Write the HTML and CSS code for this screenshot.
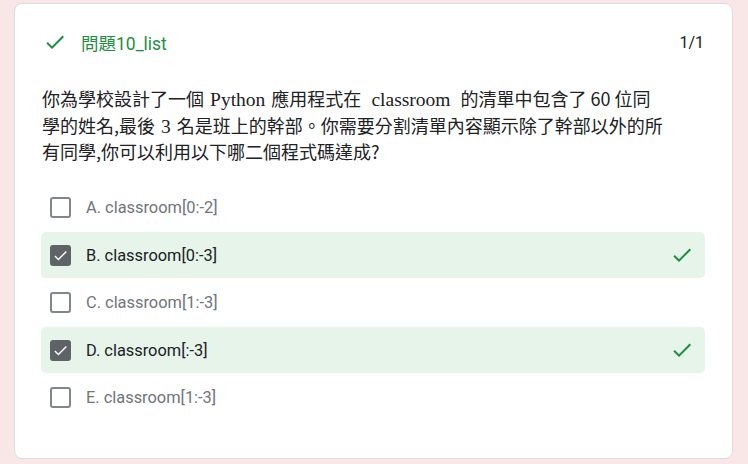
FILE: index.html
```html
<!DOCTYPE html>
<html lang="zh-Hant">
<head>
<meta charset="utf-8">
<link rel="stylesheet" href="styles.css">
</head>
<body>
<div class="card">
  <div class="header">
    <div class="title">
      <svg class="tick" width="24" height="24" viewBox="0 0 24 24"><path d="M9 16.2L4.8 12l-1.4 1.4L9 19 21 7l-1.4-1.4z" fill="#1e8e3e"/></svg>
      <span class="title-text">問題10_list</span>
    </div>
    <span class="score">1/1</span>
  </div>
  <p class="question">你為學校設計了一個 <span class="serif">Python</span> 應用程式在 &nbsp;<span class="serif">classroom</span>&nbsp; 的清單中包含了 60 位同<br>學的姓名,最後 <span class="serif">3</span> 名是班上的幹部。你需要分割清單內容顯示除了幹部以外的所<br>有同學,你可以利用以下哪二個程式碼達成?</p>
  <div class="options">
    <div class="opt"><span class="box"></span><span class="label">A. classroom[0:-2]</span></div>
    <div class="opt correct"><span class="box checked"><svg width="19" height="19" viewBox="0 0 24 24"><path d="M9 16.2L4.8 12l-1.4 1.4L9 19 21 7l-1.4-1.4z" fill="#fff"/></svg></span><span class="label">B. classroom[0:-3]</span><svg class="right" width="24" height="24" viewBox="0 0 24 24"><path d="M9 16.2L4.8 12l-1.4 1.4L9 19 21 7l-1.4-1.4z" fill="#1e8e3e"/></svg></div>
    <div class="opt"><span class="box"></span><span class="label">C. classroom[1:-3]</span></div>
    <div class="opt correct"><span class="box checked"><svg width="19" height="19" viewBox="0 0 24 24"><path d="M9 16.2L4.8 12l-1.4 1.4L9 19 21 7l-1.4-1.4z" fill="#fff"/></svg></span><span class="label">D. classroom[:-3]</span><svg class="right" width="24" height="24" viewBox="0 0 24 24"><path d="M9 16.2L4.8 12l-1.4 1.4L9 19 21 7l-1.4-1.4z" fill="#1e8e3e"/></svg></div>
    <div class="opt"><span class="box"></span><span class="label">E. classroom[1:-3]</span></div>
  </div>
</div>
</body>
</html>
```

FILE: styles.css
```css
html, body { margin: 0; padding: 0; }
body {
  background: #f9e7e8;
  width: 748px;
  height: 464px;
  overflow: hidden;
  font-family: Roboto, "Noto Sans CJK TC", sans-serif;
}
.card {
  box-sizing: border-box;
  margin: 3px 0 0 14px;
  width: 719px;
  height: 456px;
  background: #fff;
  border: 1px solid #dadce0;
  border-radius: 8px;
  padding: 26px 27px 0 26px;
}
.header {
  display: flex;
  justify-content: space-between;
  align-items: center;
  height: 24px;
}
.title { display: flex; align-items: center; }
.tick { margin-left: 2px; }
.title-text {
  margin-left: 14px;
  color: #1e8e3e;
  font-size: 17.5px;
  font-family: Roboto, "Noto Sans CJK TC", sans-serif;
}
.score {
  font-size: 16px;
  color: #202124;
  margin-right: 1px;
}
.question {
  margin: 31px 0 0 1px;
  font-family: "Noto Sans CJK TC", sans-serif;
  font-size: 18px;
  line-height: 26.5px;
  color: #202124;
}
.serif { font-family: "Liberation Serif", serif; font-size: 19.5px; line-height: 1; margin: 0 2px; }
.options {
  margin-top: 20px;
  display: flex;
  flex-direction: column;
  gap: 1.5px;
}
.opt {
  display: flex;
  align-items: center;
  height: 46px;
  border-radius: 5px;
  padding-left: 9px;
  padding-right: 11px;
}
.opt.correct { background: #e6f4ea; }
.box {
  box-sizing: border-box;
  width: 21px;
  height: 21px;
  border: 2px solid #80868b;
  border-radius: 3px;
  display: flex;
  align-items: center;
  justify-content: center;
}
.box.checked { background: #5f6368; border-color: #5f6368; }
.label {
  margin-left: 15px;
  font-size: 16.4px;
  color: #70757a;
  flex: 1;
}
.correct .label { color: #202124; }
```
